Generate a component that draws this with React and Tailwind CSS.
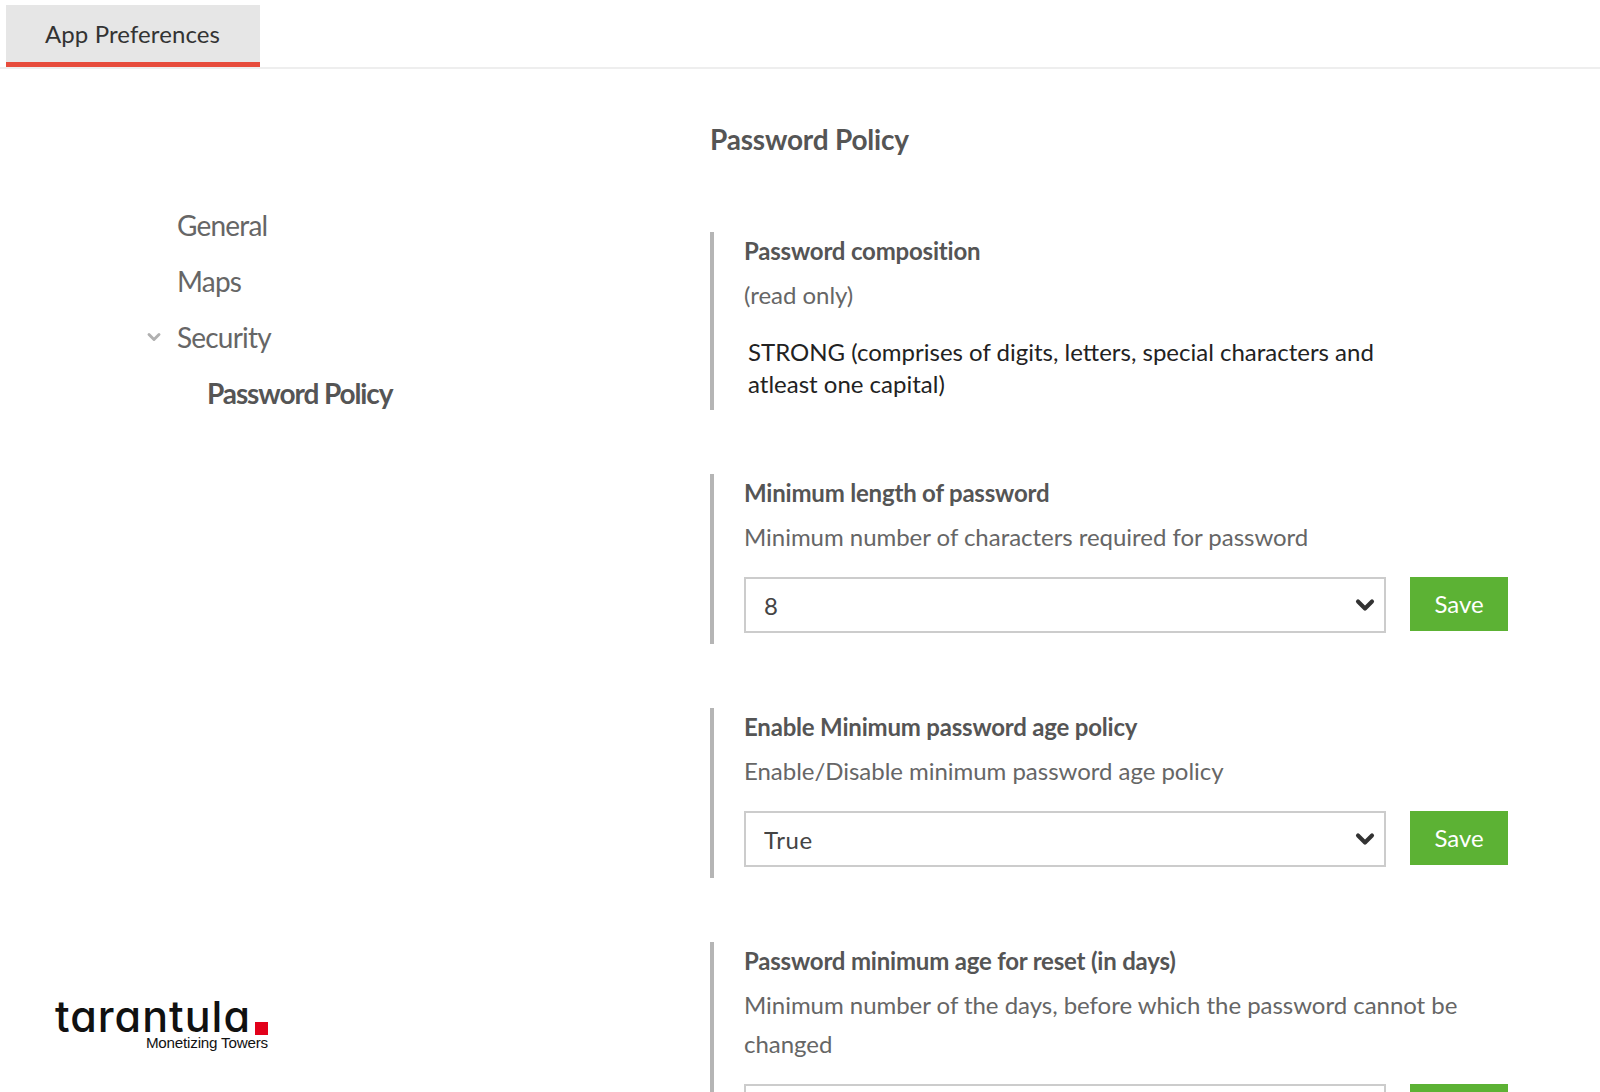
import React from 'react';
import { ChevronDown } from 'lucide-react';

const Section = ({ title, description, children, className = '' }) => (
  <section className={`border-l-4 border-[#b5b5b5] pl-[30px] pr-[14px] ${className}`}>
    <h3 className="text-[24px] leading-[38px] font-bold text-[#555] tracking-[-0.2px]">{title}</h3>
    <p className="mt-[5px] text-[24px] leading-[39px] text-[#666] tracking-[-0.03px]">{description}</p>
    {children}
  </section>
);

const SelectRow = ({ value, options, className = '' }) => (
  <div className={`flex gap-6 ${className}`}>
    <div className="relative w-[642px] h-[56px]">
      <select
        defaultValue={value}
        className="appearance-none w-full h-full border-2 border-[#ccc] bg-white pl-[18px] pt-[2px] text-[24px] text-[#444] tracking-[0.6px]"
      >
        {options.map((o) => (
          <option key={o}>{o}</option>
        ))}
      </select>
      <ChevronDown className="absolute right-[7px] top-[14px] w-[28px] h-[28px] text-[#333] pointer-events-none" strokeWidth={3.5} />
    </div>
    <button className="w-[98px] h-[54px] bg-[#5cb234] text-white text-[24px]">Save</button>
  </div>
);

export default function App() {
  return (
    <div className="h-[1092px] overflow-hidden bg-white font-['Lato',sans-serif]">
      <header className="h-[69px] border-b-2 border-[#eee] pl-[6px] pt-[5px]">
        <div className="flex items-center w-[254px] h-[62px] bg-[#e6e6e6] border-b-[5px] border-[#e74c3c] pl-[39px] text-[24px] text-[#333] tracking-[0.1px]">
          App Preferences
        </div>
      </header>

      <div className="flex h-[1023px]">
        <aside className="w-[710px] flex flex-col justify-between pt-[128px] pb-[41px]">
          <nav className="text-[28px] leading-[56px] text-[#666] pl-[177px] tracking-[-0.8px]">
            <div>General</div>
            <div>Maps</div>
            <div className="flex items-center -ml-[33px] gap-[13px]">
              <ChevronDown className="w-[20px] h-[20px] text-[#b0b0b0]" strokeWidth={3.5} />
              Security
            </div>
            <div className="pl-[30px] font-bold text-[#555] tracking-[-1.1px]">Password Policy</div>
          </nav>

          <div className="ml-[55px] w-[213px]">
            <div className="flex items-end justify-between h-[38px]">
              <span className="text-[43px] leading-[38px] font-medium text-[#111] tracking-[1px] font-['Inter',sans-serif] [font-feature-settings:'cv11']">
                tarantula
              </span>
              <span className="w-[13px] h-[13px] bg-[#e2001a]" />
            </div>
            <div className="text-right text-[15.2px] leading-[16px] text-[#111] font-['Liberation_Sans',sans-serif] tracking-[-0.2px]">
              Monetizing Towers
            </div>
          </div>
        </aside>

        <main className="flex-1 pt-[50px]">
          <h2 className="text-[28px] leading-[40px] font-bold text-[#555] tracking-[-0.2px]">Password Policy</h2>

          <div className="mt-[73px] w-[812px] flex flex-col gap-[64px]">
            <Section title="Password composition" description="(read only)" className="pb-[10px]">
              <p className="mt-[22px] pl-[4px] max-w-[680px] text-[24px] leading-[32px] text-[#222]">
                STRONG (comprises of digits, letters, special characters and atleast one capital)
              </p>
            </Section>

            <Section
              title="Minimum length of password"
              description="Minimum number of characters required for password"
              className="pb-[11px]"
            >
              <SelectRow value="8" options={['6', '8', '10', '12']} className="mt-[21px]" />
            </Section>

            <Section
              title="Enable Minimum password age policy"
              description="Enable/Disable minimum password age policy"
              className="pb-[11px]"
            >
              <SelectRow value="True" options={['True', 'False']} className="mt-[21px]" />
            </Section>

            <Section
              title="Password minimum age for reset (in days)"
              description="Minimum number of the days, before which the password cannot be changed"
              className="pb-[11px]"
            >
              <SelectRow value="1" options={['1', '2', '3']} className="mt-[21px]" />
            </Section>
          </div>
        </main>
      </div>
    </div>
  );
}
